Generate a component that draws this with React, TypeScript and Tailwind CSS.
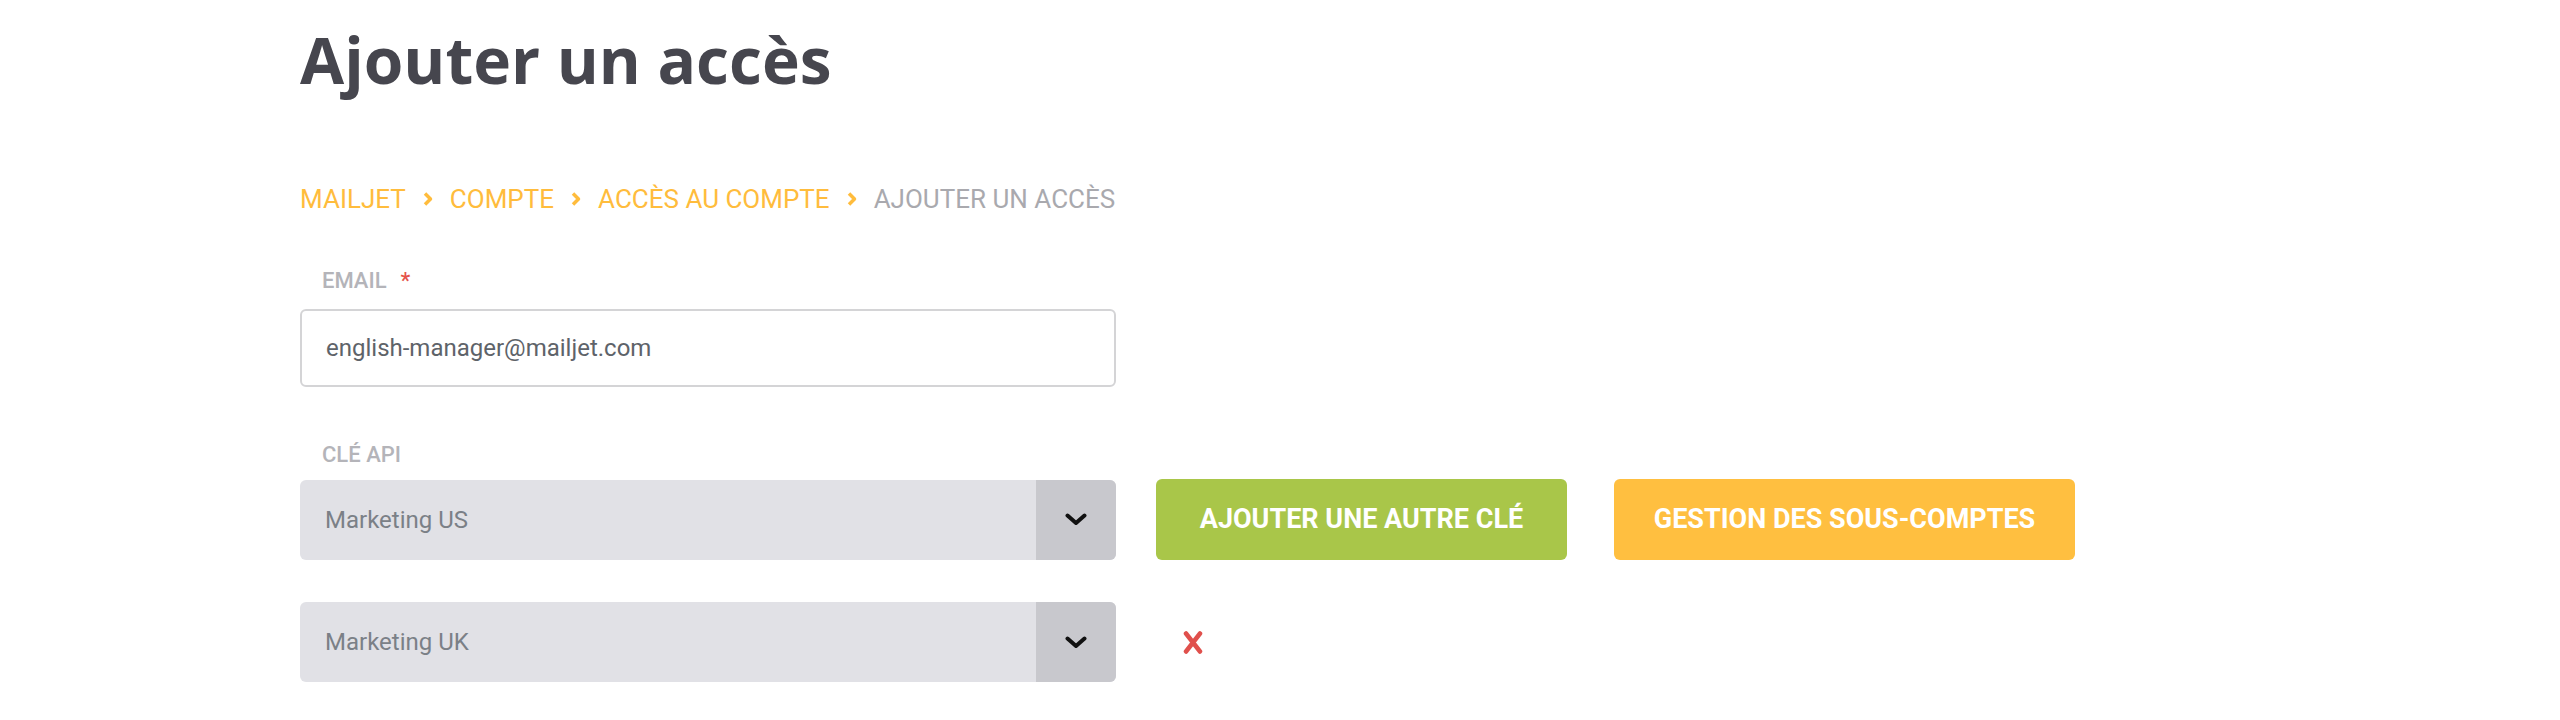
import React from 'react';

const CRUMBS = ['MAILJET', 'COMPTE', 'ACCÈS AU COMPTE'];

const CrumbArrow: React.FC = () => (
  <svg width="12" height="14" viewBox="0 0 12 14" fill="none">
    <path d="M3 1.5L8.5 7L3 12.5" stroke="#ffbc3c" strokeWidth="3.5" strokeLinejoin="round" />
  </svg>
);

const Chevron: React.FC = () => (
  <svg width="22" height="13" viewBox="0 0 22 13" fill="none">
    <path d="M2.5 2.5L11 10L19.5 2.5" stroke="#111" strokeWidth="4" strokeLinecap="round" strokeLinejoin="round" />
  </svg>
);

const KeySelect: React.FC<{ value: string }> = ({ value }) => (
  <div className="flex h-[80px] w-[816px] overflow-hidden rounded-[6px] bg-[#e1e1e6]">
    <div className="flex flex-1 items-center pl-[25px] text-[24px] text-[#7b8087]">{value}</div>
    <div className="flex w-[80px] items-center justify-center bg-[#c8c8cd]">
      <Chevron />
    </div>
  </div>
);

const App: React.FC = () => {
  return (
    <div className="min-h-[720px] bg-white pl-[300px] font-['Roboto',sans-serif]">
      {/* Title */}
      <h1 className="pt-[28px] font-['Open_Sans',sans-serif] text-[64px] font-bold leading-[64px] text-[#46464e]">
        Ajouter un accès
      </h1>

      {/* Breadcrumb */}
      <nav className="mt-[94px] flex h-[26px] items-center gap-[16px] text-[26px] leading-[26px]">
        {CRUMBS.map(c => (
          <React.Fragment key={c}>
            <span className="text-[#ffbc3c]">{c}</span>
            <CrumbArrow />
          </React.Fragment>
        ))}
        <span className="text-[#a9a9ae]">AJOUTER UN ACCÈS</span>
      </nav>

      {/* Email */}
      <div className="mt-[58px] flex items-center pl-[22px] text-[22px] font-medium leading-[22px] text-[#b4b4b9]">
        EMAIL
        <span className="ml-[14px] text-[#e5534b]">*</span>
      </div>
      <div className="mt-[17px] flex h-[78px] w-[816px] items-center rounded-[6px] border-2 border-[#d4d4d6] pl-[24px] text-[24px] text-[#5e6369]">
        english-manager@mailjet.com
      </div>

      {/* API keys */}
      <div className="mt-[57px] pl-[22px] text-[22px] font-medium leading-[22px] text-[#b4b4b9]">CLÉ API</div>
      <div className="mt-[13px] flex items-center">
        <KeySelect value="Marketing US" />
        <button className="ml-[40px] flex h-[81px] w-[411px] items-center justify-center rounded-[6px] bg-[#a9c649] text-[27px] font-bold text-white">
          AJOUTER UNE AUTRE CLÉ
        </button>
        <button className="ml-[47px] flex h-[81px] w-[461px] items-center justify-center rounded-[6px] bg-[#ffbf40] text-[27px] font-bold text-white">
          GESTION DES SOUS-COMPTES
        </button>
      </div>
      <div className="mt-[42px] flex items-center">
        <KeySelect value="Marketing UK" />
        <button className="ml-[67px] flex items-center">
          <svg width="20" height="23" viewBox="0 0 20 23" fill="none">
            <path d="M3 2.5L17 20.5M17 2.5L3 20.5" stroke="#e0504c" strokeWidth="4.5" strokeLinecap="round" />
          </svg>
        </button>
      </div>
    </div>
  );
};

export default App;
